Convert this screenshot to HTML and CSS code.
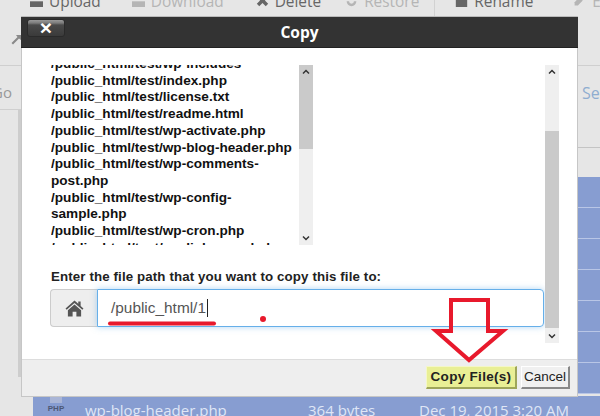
FILE: index.html
```html
<!DOCTYPE html>
<html lang="en">
<head>
    <meta charset="UTF-8">
    <title>Copy</title>
    <link rel="stylesheet" href="styles.css">
</head>
<body>
    <div class="page">
        <div class="toolbar">
            <span class="tool tool-upload"><svg class="tool-icon" viewBox="0 0 16 16"><path d="M0 9h16v7H0z"/></svg>Upload</span>
            <span class="tool tool-off tool-download"><svg class="tool-icon" viewBox="0 0 16 16"><path d="M0 9h16v7H0z"/></svg>Download</span>
            <span class="tool tool-delete"><svg class="tool-icon" viewBox="0 0 16 16"><path d="M1 4l3-3 4 4 4-4 3 3-4 4 4 4-3 3-4-4-4 4-3-3 4-4z"/></svg>Delete</span>
            <span class="tool tool-off tool-restore"><svg class="tool-icon" viewBox="0 0 16 16"><path d="M2 9a6 6 0 0 0 12 0h-3a3 3 0 0 1-6 0z"/></svg>Restore</span>
            <span class="tool tool-rename"><svg class="tool-icon" viewBox="0 0 16 16"><path d="M1 0h14v16H1z"/></svg>Rename</span>
            <span class="tool tool-off tool-edit"><svg class="tool-icon" viewBox="0 0 16 16"><path d="M2 10l6-6 4 4-6 6H2z"/></svg>Edit</span>
        </div>
        <div class="content">
            <div class="sidebar">
                <div class="go-box">Go</div>
                <div class="side-strip"></div>
            </div>
            <div class="main">
                <div class="search-bar"><span class="search-link">Se</span></div>
                <div class="table-head"></div>
                <div class="file-row"></div>
                <div class="file-row"></div>
                <div class="file-row"></div>
                <div class="file-row"></div>
                <div class="file-row"></div>
                <div class="file-row"></div>
                <div class="file-row"></div>
                <div class="file-row file-row-text">
                    <svg class="php-icon" viewBox="0 0 18 18"><path class="php-page" d="M3 0h12v6H3z"/><text x="9" y="14" text-anchor="middle">PHP</text></svg>
                    <span class="file-name">wp-blog-header.php</span>
                    <span class="file-size">364 bytes</span>
                    <span class="file-date">Dec 19, 2015 3:20 AM</span>
                </div>
            </div>
        </div>
    </div>

    <svg class="pin-icon" viewBox="0 0 10 10"><path d="M5 0h5v5L8 3.500 2 9.500 0.500 8 6.500 2z"/></svg>

    <div class="dialog">
        <div class="dialog-title">
            <button class="close-btn">&times;</button>
            <span class="dialog-name">Copy</span>
        </div>
        <div class="dialog-body">
            <div class="body-inner">
                <div class="list-wrap">
                    <div class="file-list">
                        <div class="file-list-text">
                            /public_html/test/wp-includes<br>
                            /public_html/test/index.php<br>
                            /public_html/test/license.txt<br>
                            /public_html/test/readme.html<br>
                            /public_html/test/wp-activate.php<br>
                            /public_html/test/wp-blog-header.php<br>
                            /public_html/test/wp-comments-<br>
                            post.php<br>
                            /public_html/test/wp-config-<br>
                            sample.php<br>
                            /public_html/test/wp-cron.php<br>
                            /public_html/test/wp-links-opml.php
                        </div>
                    </div>
                    <div class="scroll scroll-inner">
                        <svg class="scroll-arrow" viewBox="0 0 8 6"><path d="M1 4.500l3-3 3 3"/></svg>
                        <div class="scroll-track"><div class="scroll-thumb"></div></div>
                        <svg class="scroll-arrow" viewBox="0 0 8 6"><path d="M1 1.500l3 3 3-3"/></svg>
                    </div>
                </div>
                <label class="path-label">Enter the file path that you want to copy this file to:</label>
                <div class="path-group">
                    <span class="path-addon">
                        <svg class="home-icon" viewBox="0 0 20 18"><path d="M10 0.500L0.500 9l1.200 1.400L10 3.200l8.300 7.200L19.500 9 16.500 6.300V1.500h-2.500v2.600z"/><path d="M10 4.800L3 10.800V17.500h5v-5h4v5h5V10.800z"/></svg>
                    </span>
                    <div class="path-input"><span>/public_html/1</span><i class="caret"></i></div>
                </div>
            </div>
            <div class="scroll scroll-outer">
                <svg class="scroll-arrow" viewBox="0 0 8 6"><path d="M1 4.500l3-3 3 3"/></svg>
                <div class="scroll-track"><div class="scroll-thumb"></div></div>
                <svg class="scroll-arrow" viewBox="0 0 8 6"><path d="M1 1.500l3 3 3-3"/></svg>
            </div>
        </div>
        <div class="dialog-foot">
            <button class="btn btn-copy">Copy File(s)</button>
            <button class="btn btn-cancel">Cancel</button>
        </div>
    </div>

    <svg class="marks" viewBox="0 0 600 416">
        <path class="mark-line" d="M110 323.500H214"/>
        <circle class="mark-dot" cx="263" cy="319" r="3"/>
        <path class="mark-arrow" d="M451 300H488V331H503L469 360L436 331H451Z"/>
    </svg>
</body>
</html>
```

FILE: styles.css
```css
* {
    box-sizing: border-box;
}
html, body {
    margin: 0;
    height: 416px;
    overflow: hidden;
}
body {
    position: relative;
    font-family: "Liberation Sans", Arial, sans-serif;
    background: #e6e6e6;
}
.page {
    height: 416px;
    overflow: hidden;
}

/* page behind the dialog */
.toolbar {
    display: flex;
    height: 66px;
    overflow: hidden;
    border-bottom: 1px solid #cfcfcf;
    font-family: "Open Sans", sans-serif;
    font-size: 15.400px;
    line-height: 20px;
    color: #666;
}
.tool {
    display: flex;
    align-items: flex-start;
    flex-shrink: 0;
    gap: 6px;
    margin-top: -8px;
}
.tool-off {
    color: #b5b5b5;
}
.tool-icon {
    width: 13px;
    height: 15px;
    margin-top: 1px;
    fill: currentColor;
}
.tool-upload { margin-left: 30px; }
.tool-download { margin-left: 31px; }
.tool-delete { margin-left: 32px; }
.tool-restore { margin-left: 24px; }
.tool-rename {
    height: 90px;
    margin-left: 15px;
    padding-left: 20px;
    border-left: 1px solid #d2d2d2;
}
.tool-edit { margin-left: 40px; }

.pin-icon {
    position: absolute;
    left: 11px;
    top: 35px;
    width: 10px;
    height: 10px;
    fill: #8a8a8a;
}
.content {
    display: flex;
    height: 350px;
}
.sidebar {
    width: 33px;
    flex-shrink: 0;
}
.go-box {
    height: 44px;
    padding: 17px 0 0 0;
    border-bottom: 1px solid #cfcfcf;
    font-family: "Open Sans", sans-serif;
    font-size: 15px;
    line-height: 18px;
    color: #999;
    text-indent: -8px;
    overflow: hidden;
}
.side-strip {
    height: 267px;
    margin-left: 18px;
    background: #cdcdcd;
}
.main {
    flex: 1;
    min-width: 0;
}
.search-bar {
    height: 82px;
    padding: 17px 0 0 549px;
    border-bottom: 1px solid #c4c4c4;
    font-family: "Open Sans", sans-serif;
    font-size: 16px;
    line-height: 20px;
    color: #8fadd0;
}
.table-head {
    height: 29px;
}
.file-row {
    height: 31px;
    background: #879dd1;
    border-bottom: 1px solid #b9c6e6;
}
.file-row-text {
    display: flex;
    align-items: flex-start;
    height: 40px;
    margin-top: 2px;
    font-family: "Open Sans", sans-serif;
    font-size: 15px;
    line-height: 20px;
    color: #dfe6f6;
    border-bottom: 0;
}
.php-icon {
    width: 18px;
    height: 18px;
    margin: 1px 0 0 14px;
}
.php-icon text {
    font-family: "Liberation Sans", sans-serif;
    font-size: 8px;
    font-weight: bold;
    fill: #4c5875;
}
.php-page {
    fill: #a9b5d6;
}
.file-name {
    width: 223px;
    margin: 4px 0 0 20px;
}
.file-size {
    width: 111px;
    margin-top: 4px;
}
.file-date {
    margin-top: 4px;
}

/* dialog */
.dialog {
    position: absolute;
    left: 21px;
    top: 16px;
    width: 557px;
    height: 381px;
    display: flex;
    flex-direction: column;
    background: #fff;
    border: 1px solid #c6c6c6;
    border-top-color: #bbb;
}
.dialog-title {
    position: relative;
    height: 31px;
    flex-shrink: 0;
    margin: 0 -1px;
    display: flex;
    align-items: center;
    justify-content: center;
    background: #333;
    border-bottom: 1px solid #222;
}
.dialog-name {
    font-family: "Open Sans", sans-serif;
    font-size: 15.500px;
    font-weight: bold;
    color: #fff;
}
.close-btn {
    position: absolute;
    left: 6px;
    top: 2px;
    width: 38px;
    height: 18px;
    padding: 0;
    border: 1px solid #2a2a2a;
    border-radius: 3px;
    background: linear-gradient(#999 0, #7c7c7c 3px, #4a4a4a 5px, #3a3a3a 100%);
    font-family: "Liberation Sans", sans-serif;
    font-size: 21px;
    font-weight: bold;
    line-height: 16px;
    color: #fff;
}
.dialog-body {
    flex: 1;
    min-height: 0;
    display: flex;
    align-items: flex-start;
    padding: 17px 18px 0 29px;
}
.body-inner {
    flex: 1;
    min-width: 0;
}
.list-wrap {
    display: flex;
    height: 180px;
}
.file-list {
    width: 248px;
    height: 180px;
    overflow: hidden;
}
.file-list-text {
    margin-top: -9px;
    font-size: 13.600px;
    font-weight: bold;
    line-height: 16.700px;
    color: #111;
}
.scroll {
    display: flex;
    flex-direction: column;
    width: 14px;
    flex-shrink: 0;
    background: #efefef;
}
.scroll-inner {
    height: 180px;
}
.scroll-outer {
    height: 278px;
    margin-left: 1px;
}
.scroll-track {
    flex: 1;
}
.scroll-thumb {
    background: #cacaca;
}
.scroll-inner .scroll-track {
    margin-top: -14px;
}
.scroll-inner .scroll-thumb {
    height: 84px;
}
.scroll-outer .scroll-thumb {
    height: 197px;
    margin-top: 52px;
}
.scroll-arrow {
    position: relative;
    display: block;
    flex-shrink: 0;
    width: 14px;
    height: 14px;
    padding: 4px 3px;
    fill: none;
    stroke: #333;
    stroke-width: 1.500;
}
.path-label {
    display: block;
    margin-top: 24px;
    font-size: 13.300px;
    font-weight: bold;
    line-height: 15px;
    letter-spacing: 0.120px;
    color: #222;
}
.path-group {
    display: flex;
    height: 38px;
    margin-top: 5px;
    margin-left: -1px;
}
.path-addon {
    display: flex;
    align-items: center;
    justify-content: center;
    width: 47px;
    flex-shrink: 0;
    background: #eee;
    border: 1px solid #ccc;
    border-right: 0;
    border-radius: 4px 0 0 4px;
}
.home-icon {
    width: 19px;
    height: 17px;
    fill: #555;
}
.path-input {
    flex: 1;
    display: flex;
    align-items: center;
    padding-left: 13px;
    border: 1px solid #66afe9;
    border-radius: 0 4px 4px 0;
    box-shadow: 0 0 6px rgba(102, 175, 233, 0.5);
    font-size: 15.400px;
    color: #555;
}
.caret {
    width: 1px;
    height: 18px;
    margin-left: 1px;
    background: #222;
}
.dialog-foot {
    display: flex;
    justify-content: flex-end;
    align-items: center;
    gap: 4px;
    height: 37px;
    padding-bottom: 2px;
    flex-shrink: 0;
    padding-right: 7px;
    background: #eee;
    border-top: 1px solid #ddd;
}
.btn {
    height: 23px;
    padding: 0;
    font-family: "Liberation Sans", sans-serif;
    font-size: 13.500px;
    border-width: 1px 2px 2px 1px;
    border-style: solid;
    color: #222;
}
.btn-copy {
    width: 91px;
    font-weight: bold;
    letter-spacing: 0.300px;
    background: #e9ef95;
    border-color: #f4f7c8 #9ea55a #9ea55a #f4f7c8;
}
.btn-cancel {
    width: 49px;
    background: #f0f0f0;
    border-color: #fff #888 #888 #fff;
}

/* red hand drawn marks on top of the screenshot */
.marks {
    position: absolute;
    left: 0;
    top: 0;
    width: 600px;
    height: 416px;
}
.mark-line {
    fill: none;
    stroke: #e8192c;
    stroke-width: 4;
    stroke-linecap: round;
}
.mark-dot {
    fill: #e8192c;
}
.mark-arrow {
    fill: none;
    stroke: #e8192c;
    stroke-width: 4;
}
```
